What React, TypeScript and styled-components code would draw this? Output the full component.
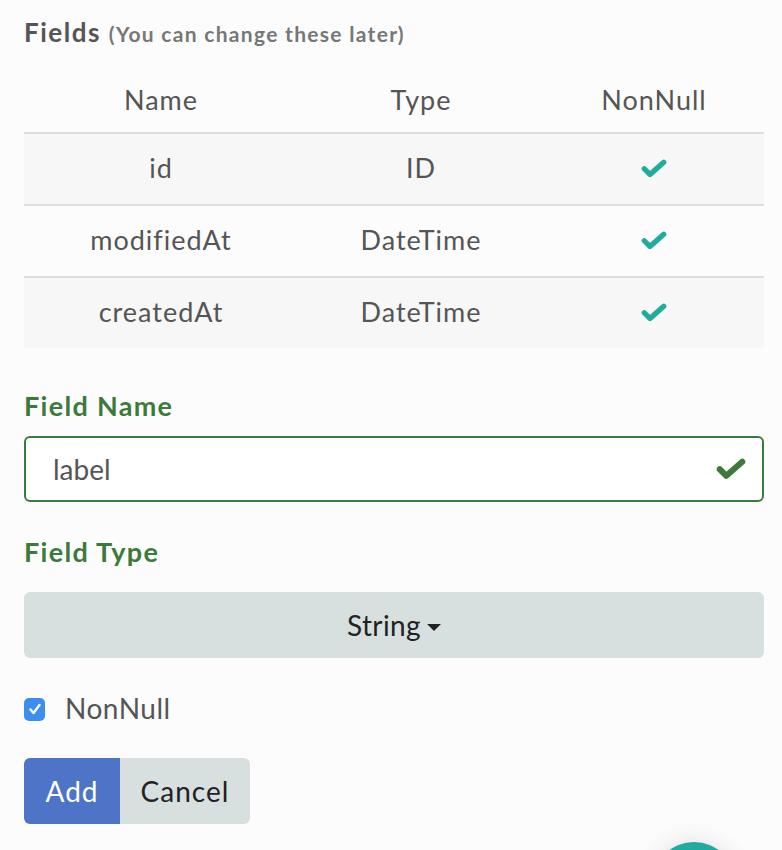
import React from "react";
import styled, { createGlobalStyle } from "styled-components";

const Global = createGlobalStyle`
  html, body { margin: 0; padding: 0; background: #fcfcfc; }
  body { font-family: Lato, "Noto Sans", sans-serif; overflow: hidden; }
`;

const Page = styled.div`
  width: 782px;
  height: 850px;
  position: relative;
  overflow: hidden;
  box-sizing: border-box;
  padding: 16px 18px 0 24px;
`;

const Heading = styled.h2`
  margin: 0;
  font-size: 26px;
  font-weight: 700;
  letter-spacing: 1.5px;
  color: #555;
  line-height: 32px;
`;

const Sub = styled.span`
  font-size: 21px;
  letter-spacing: 1.3px;
  color: #777;
`;

const Table = styled.div`
  display: grid;
  grid-template-columns: 274px 246px 220px;
  width: 740px;
  margin-top: 22px;
`;

const HeadCell = styled.div`
  height: 62px;
  box-sizing: border-box;
  padding-bottom: 6px;
  display: flex;
  align-items: center;
  justify-content: center;
  font-size: 27px;
  letter-spacing: 1px;
  color: #555;
  border-bottom: 2px solid #dedede;
`;

const Cell = styled.div<{ $shade: boolean; $last: boolean }>`
  height: 70px;
  display: flex;
  align-items: center;
  justify-content: center;
  font-size: 27px;
  letter-spacing: 1px;
  color: #555;
  background: ${(p) => (p.$shade ? "#f7f7f7" : "#fcfcfc")};
  border-bottom: ${(p) => (p.$last ? "none" : "2px solid #dedede")};
`;

const CellText = styled.span`
  margin-top: -4px;
`;

const Label = styled.div<{ $gap: number }>`
  margin-top: ${(p) => p.$gap}px;
  font-size: 27px;
  font-weight: 700;
  letter-spacing: 1.3px;
  color: #3c7a3c;
  line-height: 32px;
`;

const InputBox = styled.div`
  margin-top: 14px;
  width: 740px;
  height: 66px;
  box-sizing: border-box;
  border: 2px solid #3c7a3c;
  border-radius: 6px;
  background: #fff;
  display: flex;
  align-items: center;
  justify-content: space-between;
  padding: 0 16px 0 27px;
  font-size: 28px;
  color: #555;
`;

const Dropdown = styled.div`
  margin-top: 24px;
  width: 740px;
  height: 66px;
  border-radius: 6px;
  background: #d8e0df;
  display: flex;
  align-items: center;
  justify-content: center;
  gap: 6px;
  font-size: 28px;
  letter-spacing: 0.4px;
  color: #222;
`;

const Caret = styled.span`
  width: 0;
  height: 0;
  border-left: 7px solid transparent;
  border-right: 7px solid transparent;
  border-top: 7px solid #222;
  margin-top: 4px;
`;

const CheckRow = styled.div`
  margin-top: 33px;
  display: flex;
  align-items: center;
  gap: 20px;
  font-size: 28px;
  letter-spacing: 0.5px;
  color: #555;
  height: 34px;
`;

const Box = styled.span`
  width: 21px;
  height: 23px;
  border-radius: 5px;
  background: #3b8ef0;
  display: flex;
  align-items: center;
  justify-content: center;
  margin-top: 2px;
`;

const Buttons = styled.div`
  margin-top: 33px;
  display: flex;
  width: fit-content;
  border-radius: 6px;
  overflow: hidden;
`;

const Btn = styled.button<{ $primary?: boolean }>`
  height: 66px;
  border: none;
  margin: 0;
  font-family: inherit;
  font-size: 28px;
  letter-spacing: 1px;
  width: ${(p) => (p.$primary ? "96px" : "130px")};
  padding: 0;
  background: ${(p) => (p.$primary ? "#4e74c8" : "#d8e0df")};
  color: ${(p) => (p.$primary ? "#fff" : "#222")};
`;

const Fab = styled.div`
  position: absolute;
  left: 652px;
  top: 842px;
  width: 84px;
  height: 84px;
  border-radius: 50%;
  background: #1fab9d;
  box-shadow: 0 0 24px rgba(0, 0, 0, 0.12);
`;

const Tick = ({ color, w = 26 }: { color: string; w?: number }) => (
  <svg width={w} height={w * 0.75} viewBox="0 0 32 24">
    <path
      d="M4 12 L11 19 L28 4"
      fill="none"
      stroke={color}
      strokeWidth="6.5"
      strokeLinecap="round"
      strokeLinejoin="round"
    />
  </svg>
);

const rows = [
  ["id", "ID"],
  ["modifiedAt", "DateTime"],
  ["createdAt", "DateTime"],
];

export default function App() {
  return (
    <Page>
      <Global />
      <Heading>
        Fields <Sub>(You can change these later)</Sub>
      </Heading>
      <Table>
        <HeadCell>Name</HeadCell>
        <HeadCell>Type</HeadCell>
        <HeadCell>NonNull</HeadCell>
        {rows.map(([n, t], i) => {
          const shade = i % 2 === 0;
          const last = i === rows.length - 1;
          return (
            <React.Fragment key={n}>
              <Cell $shade={shade} $last={last}>
                <CellText>{n}</CellText>
              </Cell>
              <Cell $shade={shade} $last={last}>
                <CellText>{t}</CellText>
              </Cell>
              <Cell $shade={shade} $last={last}>
                <Tick color="#1fab9d" w={26} />
              </Cell>
            </React.Fragment>
          );
        })}
      </Table>
      <Label $gap={42}>Field Name</Label>
      <InputBox>
        <span>label</span>
        <Tick color="#3c7a3c" w={30} />
      </InputBox>
      <Label $gap={34}>Field Type</Label>
      <Dropdown>
        String <Caret />
      </Dropdown>
      <CheckRow>
        <Box>
          <svg width="14" height="14" viewBox="0 0 14 14">
            <path
              d="M2.5 7.5 L5.5 11 L11.5 3"
              fill="none"
              stroke="#fff"
              strokeWidth="2.4"
              strokeLinecap="round"
              strokeLinejoin="round"
            />
          </svg>
        </Box>
        NonNull
      </CheckRow>
      <Buttons>
        <Btn $primary>Add</Btn>
        <Btn>Cancel</Btn>
      </Buttons>
      <Fab />
    </Page>
  );
}
